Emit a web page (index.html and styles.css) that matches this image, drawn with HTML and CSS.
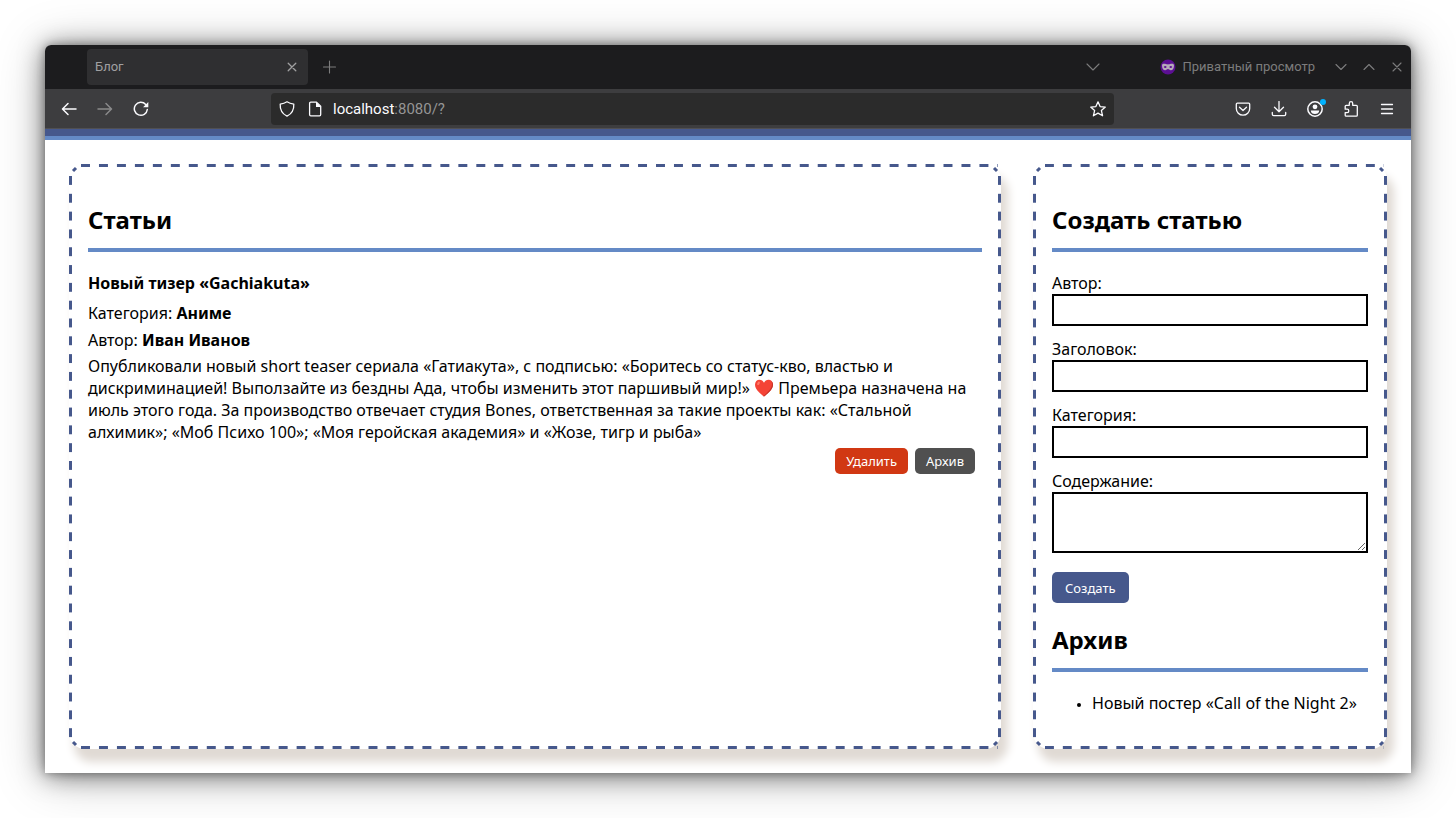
FILE: index.html
```html
<!DOCTYPE html>
<html lang="ru">
<head>
<meta charset="utf-8">
<meta name="viewport" content="width=device-width, initial-scale=1">
<title>Блог</title>
<link rel="stylesheet" href="styles.css">
</head>
<body>
<div class="window">
  <header class="tabs">
    <div class="tab">
      <span class="tab-title">Блог</span>
      <button class="tab-close" type="button" aria-label="Закрыть вкладку"><svg viewBox="0 0 16 16"><path d="M4.200 4.200l7.600 7.600M11.800 4.200l-7.600 7.600"/></svg></button>
    </div>
    <button class="icon-button tab-new" type="button" aria-label="Новая вкладка"><svg viewBox="0 0 16 16"><path d="M7.500 2v12M1.500 8h12"/></svg></button>
    <button class="window-button tab-list" type="button" aria-label="Список вкладок"><svg viewBox="0 0 16 16"><path d="M2 5l6 6 6-6"/></svg></button>
    <div class="private">
      <svg class="private-icon" viewBox="0 0 16 16"><circle cx="8" cy="8" r="7.5" fill="#5b0f93"/><path fill="#b5aab9" fill-rule="evenodd" d="M2 6.400C2 4.700 3.400 4.500 5 4.700c1.400.2 2 .7 3 .7s1.600-.5 3-.7c1.600-.2 3 0 3 1.700 0 2.900-1.300 4.900-3.200 4.900-1.300 0-1.900-1.200-2.800-1.200s-1.500 1.200-2.800 1.200C3.300 11.300 2 9.300 2 6.400zM3.700 8c.8 1.300 2.300 1.300 3 0-.7-1.200-2.200-1.200-3 0zm5.600 0c.7 1.300 2.200 1.300 3 0-.8-1.200-2.300-1.200-3 0z"/></svg>
      <span>Приватный просмотр</span>
    </div>
    <button class="window-button" type="button" aria-label="Свернуть"><svg viewBox="0 0 16 16"><path d="M3 5.500l5 5 5-5"/></svg></button>
    <button class="window-button" type="button" aria-label="Развернуть"><svg viewBox="0 0 16 16"><path d="M3 10.500l5-5 5 5"/></svg></button>
    <button class="window-button" type="button" aria-label="Закрыть"><svg viewBox="0 0 16 16"><path d="M4 4l8 8M12 4l-8 8"/></svg></button>
  </header>

  <nav class="toolbar">
    <button class="icon-button" type="button" aria-label="Назад"><svg viewBox="0 0 16 16"><path class="heavy" d="M15 8H2M7 2.500L1.500 8 7 13.500"/></svg></button>
    <button class="icon-button" type="button" aria-label="Вперёд" disabled><svg viewBox="0 0 16 16"><path class="heavy" d="M1 8h13M9 2.500L14.500 8 9 13.500"/></svg></button>
    <button class="icon-button" type="button" aria-label="Обновить"><svg viewBox="0 0 16 16"><path class="heavy" d="M14.300 8.500A6.500 6.500 0 1 1 12.700 3.500"/><path class="solid" d="M15.300 1v5.200h-5.200z"/></svg></button>
    <div class="address">
      <button class="address-button" type="button" aria-label="Защита"><svg viewBox="0 0 16 16"><path d="M8 .8c2 1.300 4.300 2 6.800 2.300.3 4.900-1.900 9.600-6.800 12.100C3.100 12.700.9 8 1.200 3.100 3.700 2.800 6 2.100 8 .8z"/></svg></button>
      <button class="address-button" type="button" aria-label="О сайте"><svg viewBox="0 0 16 16"><path d="M9.500 1.200H3.800c-.7 0-1.200.5-1.200 1.200v11.200c0 .7.5 1.200 1.200 1.200h8.700c.7 0 1.200-.5 1.200-1.200V5.200z"/><path class="solid" d="M9 1v5h5z"/></svg></button>
      <div class="url" role="textbox" aria-label="Адрес" tabindex="0"><span class="host">localhost</span>:8080/?</div>
      <button class="address-button" type="button" aria-label="В закладки"><svg viewBox="0 0 16 16"><path d="M8 .8l2.100 4.800 5.200.5-3.900 3.500 1.200 5.200L8 12.100l-4.600 2.700 1.200-5.200L.7 6.100l5.200-.5z"/></svg></button>
    </div>
    <button class="icon-button" type="button" aria-label="Pocket"><svg viewBox="0 0 16 16"><path d="M2.300 2.200h11.400c.6 0 1 .4 1 1v4.200c0 3.800-3 6.800-6.700 6.800S1.300 11.200 1.300 7.400V3.200c0-.6.4-1 1-1z"/><path d="M4.500 6.200L8 9.500l3.500-3.300"/></svg></button>
    <button class="icon-button" type="button" aria-label="Загрузки"><svg viewBox="0 0 16 16"><path d="M8 .5v10.300M3.500 6.300L8 10.800l4.500-4.500M1.300 11.500v1.700c0 .8.600 1.400 1.400 1.400h10.600c.8 0 1.400-.6 1.400-1.400v-1.700"/></svg></button>
    <button class="icon-button account" type="button" aria-label="Аккаунт"><svg viewBox="0 0 16 16"><circle class="heavy" cx="8" cy="8" r="7.200"/><circle class="solid" cx="8" cy="5.800" r="2.400"/><path class="solid" d="M3.800 9.400h8.400c0 2.200-1.900 3.600-4.200 3.600s-4.200-1.400-4.200-3.600z"/></svg><span class="badge"></span></button>
    <button class="icon-button" type="button" aria-label="Расширения"><svg viewBox="0 0 16 16"><path d="M6.300 4.300V2.400a1.700 1.700 0 0 1 3.400 0v1.900h3.600c.6 0 1 .4 1 1v8.900c0 .6-.4 1-1 1H3.200c-.6 0-1-.4-1-1v-2.600h1.900a1.700 1.700 0 0 0 0-3.400H2.200V5.300c0-.6.400-1 1-1z"/></svg></button>
    <button class="icon-button" type="button" aria-label="Меню"><svg viewBox="0 0 16 16"><path d="M2.500 3.500h11M2.500 8h11M2.500 12.500h11"/></svg></button>
  </nav>

  <div class="page">
    <div class="page-header"></div>
    <div class="columns">
      <main class="panel">
        <svg class="corners" aria-hidden="true">
          <path d="M4 7l3-3"/>
          <svg x="100%" overflow="visible"><path d="M-4 7l-3-3"/></svg>
          <svg y="100%" overflow="visible"><path d="M4-7l3 3"/></svg>
          <svg x="100%" y="100%" overflow="visible"><path d="M-4-7l-3 3"/></svg>
        </svg>
        <h2>Статьи</h2>
        <article class="article">
          <h3>Новый тизер «Gachiakuta»</h3>
          <p class="category">Категория: <b>Аниме</b></p>
          <p class="author">Автор: <b>Иван Иванов</b></p>
          <p class="text">Опубликовали новый short teaser сериала «Гатиакута», с подписью: «Боритесь со статус-кво, властью и дискриминацией! Выползайте из бездны Ада, чтобы изменить этот паршивый мир!» <svg class="heart" role="img" aria-label="❤️" viewBox="0 0 20 20"><path fill="#f44336" d="M10 18.500C7.500 16.500 1 11.800 1 6.700 1 3.800 3 1.800 5.500 1.800c2 0 3.600 1.200 4.500 3 .9-1.800 2.500-3 4.500-3 2.500 0 4.500 2 4.500 4.900 0 5.100-6.500 9.800-9 11.800z"/><path fill="#c33529" d="M17.300 3c.5.800.7 1.800.7 2.900 0 4.900-5.500 9.300-8.600 12.100l.6.500c2.500-2 9-6.700 9-11.800 0-1.500-.6-2.900-1.700-3.700z"/><ellipse cx="4.500" cy="5.300" rx="1.100" ry="1.900" fill="#ff7a69" transform="rotate(32 4.500 5.300)"/></svg> Премьера назначена на июль этого года. За производство отвечает студия Bones, ответственная за такие проекты как: «Стальной алхимик»; «Моб Психо 100»; «Моя геройская академия» и «Жозе, тигр и рыба»</p>
          <div class="actions">
            <button class="button delete" type="button">Удалить</button>
            <button class="button archive" type="button">Архив</button>
          </div>
        </article>
      </main>

      <aside class="panel">
        <svg class="corners" aria-hidden="true">
          <path d="M4 7l3-3"/>
          <svg x="100%" overflow="visible"><path d="M-4 7l-3-3"/></svg>
          <svg y="100%" overflow="visible"><path d="M4-7l3 3"/></svg>
          <svg x="100%" y="100%" overflow="visible"><path d="M-4-7l-3 3"/></svg>
        </svg>
        <h2>Создать статью</h2>
        <form class="form">
          <div class="field"><label for="author">Автор:</label><input id="author" type="text"></div>
          <div class="field"><label for="title">Заголовок:</label><input id="title" type="text"></div>
          <div class="field"><label for="category">Категория:</label><input id="category" type="text"></div>
          <div class="field"><label for="content">Содержание:</label><textarea id="content"></textarea></div>
          <button class="button create" type="button">Создать</button>
        </form>
        <h2>Архив</h2>
        <ul class="archive-list"><li>Новый постер «Call of the Night 2»</li></ul>
      </aside>
    </div>
  </div>
</div>
</body>
</html>
```

FILE: styles.css
```css
* {
  box-sizing: border-box;
}

body {
  display: flex;
  min-height: 100vh;
  margin: 0;
  padding: 45px;
  background: #fff;
  color: #000;
  font: 16px/22px "Noto Sans", sans-serif;
}

.window {
  flex: 1;
  min-width: 0;
  display: flex;
  flex-direction: column;
  border-radius: 6px 6px 0 0;
  box-shadow: 0 0 8px rgba(0, 0, 0, 0.3), 0 2px 24px rgba(0, 0, 0, 0.5), 0 4px 50px rgba(0, 0, 0, 0.25);
}

button {
  padding: 0;
  border: 0;
  background: none;
  color: inherit;
  font: inherit;
}

/* Browser frame */

.tabs svg,
.toolbar svg {
  display: block;
  width: 16px;
  height: 16px;
  fill: none;
  stroke: currentColor;
  stroke-width: 1.3;
  stroke-linejoin: round;
  stroke-linecap: round;
}

.tabs,
.toolbar {
  display: flex;
  align-items: center;
  font-family: Roboto, sans-serif;
}

.tabs {
  height: 44px;
  padding-left: 42px;
  border-radius: 6px 6px 0 0;
  background: #1c1c1e;
  color: #7c7c7d;
  font-size: 13px;
}

.tabs svg {
  stroke-width: 1.1;
}

.tab {
  display: flex;
  align-items: center;
  justify-content: space-between;
  width: 221px;
  height: 36px;
  padding: 0 8px;
  border-radius: 4px;
  background: #2f2f31;
  color: #a0a0a1;
}

.tab-close svg {
  stroke-width: 1.3;
}

.icon-button {
  display: flex;
  align-items: center;
  justify-content: center;
  width: 36px;
  height: 36px;
}

.tab-new {
  margin-left: 4px;
}

.window-button {
  display: flex;
  justify-content: center;
  width: 28px;
}

.tab-list {
  margin-left: auto;
}

.private {
  display: flex;
  align-items: center;
  gap: 6px;
  margin: 0 12px 0 53px;
}

.tabs .private-icon {
  stroke: none;
}

.toolbar {
  height: 40px;
  padding: 0 6px;
  border-bottom: 1px solid #505053;
  background: #3d3d3f;
  color: #fbfbfe;
}

.toolbar .icon-button:disabled {
  color: #8a8a8b;
}

.toolbar .heavy {
  stroke-width: 1.5;
}

.toolbar .solid {
  fill: currentColor;
  stroke: none;
}

.address {
  flex: 1;
  display: flex;
  align-items: center;
  height: 32px;
  margin: 0 111px 0 112px;
  padding: 0 2px;
  border-radius: 4px;
  background: #2b2b2b;
}

.address-button {
  display: flex;
  justify-content: center;
  width: 28px;
}

.url {
  flex: 1;
  padding-left: 4px;
  color: #959595;
  font-size: 15px;
}

.host {
  color: #fbfbfe;
}

.account {
  position: relative;
}

.badge {
  position: absolute;
  top: 8px;
  right: 7px;
  width: 6px;
  height: 6px;
  border-radius: 50%;
  background: #00b3ff;
}

/* Blog */

.page {
  flex: 1;
  display: flex;
  flex-direction: column;
  background: #fff;
}

.page-header {
  height: 11px;
  border-bottom: 4px solid #648ac6;
  background: #46588c;
}

.columns {
  flex: 1;
  display: grid;
  grid-template-columns: minmax(0, 1fr) 354px;
  gap: 32px;
  padding: 24px;
}

.panel {
  position: relative;
  padding: 19px;
  border-radius: 16px;
  background: #fff;
  box-shadow: 6px 12px 10px 1px #e0dad4;
}

/* Dashed frame: straight sides as rounded gradient tiles, corners as strokes */

.panel::before,
.panel::after {
  content: "";
  position: absolute;
  pointer-events: none;
}

.panel::before {
  inset: 0 3px 0 12px;
  background-image: linear-gradient(90deg, #46588c 50%, transparent 0), linear-gradient(90deg, #46588c 50%, transparent 0);
  background-position: top left, bottom left;
  background-size: 18px 3px;
  background-repeat: round no-repeat;
}

.panel::after {
  inset: 12px 0 3px;
  background-image: linear-gradient(#46588c 50%, transparent 0), linear-gradient(#46588c 50%, transparent 0);
  background-position: top left, top right;
  background-size: 3px 18px;
  background-repeat: no-repeat round;
}

.corners {
  position: absolute;
  inset: 0;
  width: 100%;
  height: 100%;
  stroke: #46588c;
  stroke-width: 3px;
  pointer-events: none;
}

h2 {
  margin: 20px 0;
  padding-bottom: 12px;
  border-bottom: 4px solid #648ac6;
  font-size: 24px;
  line-height: 33px;
}

h3,
p {
  margin: 0;
  font-size: 16px;
}

.category {
  margin-top: 8px;
}

.author {
  margin: 5px 0 4px;
}

.heart {
  width: 20px;
  height: 20px;
  vertical-align: -4px;
}

.actions {
  display: flex;
  justify-content: flex-end;
  gap: 7px;
  margin: 5px 7px 0 0;
}

.button {
  height: 26px;
  padding: 0 11px;
  border-radius: 5px;
  color: #fff;
  font-size: 13px;
}

.delete {
  background: #d13813;
}

.archive {
  background: #505050;
}

.create {
  height: 31px;
  margin-top: 7px;
  padding: 0 13px;
  background: #46588c;
}

.form {
  display: flex;
  flex-direction: column;
  align-items: flex-start;
  gap: 12px;
}

.field {
  display: flex;
  flex-direction: column;
  width: 100%;
}

.field input,
.field textarea {
  width: 100%;
  height: 32px;
  border: 2px solid #000;
  border-radius: 0;
  background: #fff;
  font: inherit;
}

.field textarea {
  height: 61px;
  resize: both;
}

.archive-list {
  margin: 0 0 16px;
  padding-left: 40px;
}

.archive-list li::marker {
  font-size: 12px;
}
```
